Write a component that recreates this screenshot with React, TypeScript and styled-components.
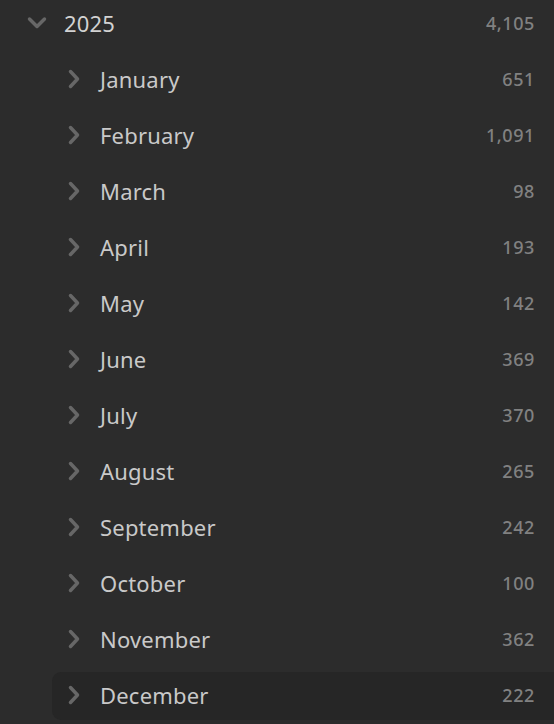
import React from 'react';
import styled, { createGlobalStyle } from 'styled-components';

const GlobalStyle = createGlobalStyle`
  html, body {
    margin: 0;
    padding: 0;
    background: #2c2c2c;
    overflow: hidden;
  }
  body {
    font-family: "Noto Sans", "Open Sans", sans-serif;
  }
`;

const Tree = styled.div`
  width: 554px;
  height: 724px;
  display: flex;
  flex-direction: column;
  gap: 8px;
  background: #2c2c2c;
  overflow: hidden;
`;

const YearRow = styled.div`
  height: 48px;
  display: flex;
  align-items: center;
  padding: 0 19px 2px 27px;
  box-sizing: border-box;
`;

const MonthRow = styled.div<{ active?: boolean }>`
  height: 48px;
  display: flex;
  align-items: center;
  margin: 0 -12px 0 52px;
  padding: 0 31px 2px 16px;
  box-sizing: border-box;
  border-radius: 9px;
  background: ${({ active }) => (active ? '#262626' : 'transparent')};
`;

const Chevron = styled.svg<{ down?: boolean }>`
  flex: 0 0 auto;
  width: ${({ down }) => (down ? '20px' : '12px')};
  height: ${({ down }) => (down ? '14px' : '20px')};
  color: #676767;
`;

const Label = styled.span<{ year?: boolean }>`
  flex: 1;
  margin-left: ${({ year }) => (year ? '17px' : '20px')};
  font-size: 22px;
  color: ${({ year }) => (year ? '#d2d2d2' : '#c9c9c9')};
  letter-spacing: 0.2px;
`;

const Count = styled.span`
  font-size: 18px;
  font-weight: 500;
  color: #818181;
  letter-spacing: 0.6px;
`;

const months: [string, string][] = [
  ['January', '651'],
  ['February', '1,091'],
  ['March', '98'],
  ['April', '193'],
  ['May', '142'],
  ['June', '369'],
  ['July', '370'],
  ['August', '265'],
  ['September', '242'],
  ['October', '100'],
  ['November', '362'],
  ['December', '222'],
];

const DownIcon = () => (
  <Chevron down viewBox="0 0 20 14">
    <path d="M2.5 3 L10 10.5 L17.5 3" fill="none" stroke="currentColor" strokeWidth="3.5" strokeLinecap="round" strokeLinejoin="round" />
  </Chevron>
);

const RightIcon = () => (
  <Chevron viewBox="0 0 12 20">
    <path d="M2.5 2.5 L9.5 10 L2.5 17.5" fill="none" stroke="currentColor" strokeWidth="3.5" strokeLinecap="round" strokeLinejoin="round" />
  </Chevron>
);

export default function App() {
  return (
    <>
      <GlobalStyle />
      <Tree>
        <YearRow>
          <DownIcon />
          <Label year>2025</Label>
          <Count>4,105</Count>
        </YearRow>
        {months.map(([name, count]) => (
          <MonthRow key={name} active={name === 'December'}>
            <RightIcon />
            <Label>{name}</Label>
            <Count>{count}</Count>
          </MonthRow>
        ))}
      </Tree>
    </>
  );
}
